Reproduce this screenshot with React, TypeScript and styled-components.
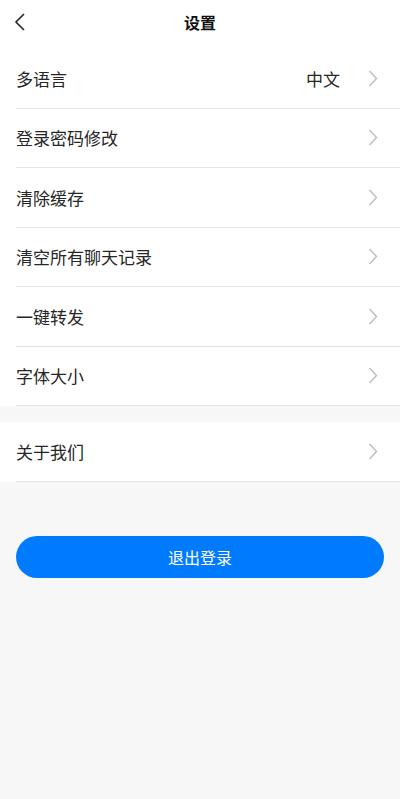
import styled, { createGlobalStyle } from "styled-components";

const GlobalStyle = createGlobalStyle`
  html, body {
    margin: 0;
    padding: 0;
    background: #f7f7f7;
  }
  body {
    font-family: "Noto Sans CJK SC", "Noto Sans", sans-serif;
  }
`;

const Page = styled.div`
  min-height: 799px;
  background: #f7f7f7;
  display: flex;
  flex-direction: column;
`;

const Header = styled.div`
  height: 49px;
  box-sizing: border-box;
  padding-top: 11px;
  background: #fff;
  display: flex;
  align-items: flex-start;
  justify-content: center;
  position: relative;
`;

const BackButton = styled.button`
  position: absolute;
  left: 10px;
  top: 12px;
  width: 20px;
  height: 20px;
  padding: 0;
  border: none;
  background: none;
  display: flex;
  align-items: center;
  justify-content: center;
`;

const Title = styled.h1`
  margin: 0;
  font-size: 16px;
  line-height: 22px;
  font-weight: 700;
  color: #111;
`;

const Section = styled.div<{ $gapTop?: boolean }>`
  background: #fff;
  margin-top: ${({ $gapTop }) => ($gapTop ? "16px" : "0")};
`;

const Row = styled.div`
  height: 58.5px;
  margin-left: 16px;
  padding-right: 22px;
  border-bottom: 1px solid #e3e3e3;
  display: flex;
  align-items: center;
  justify-content: space-between;
`;

const Label = styled.span`
  font-size: 17px;
  color: #262626;
`;

const Right = styled.div`
  display: flex;
  align-items: center;
  gap: 28px;
`;

const Value = styled.span`
  font-size: 17px;
  color: #262626;
`;

const Footer = styled.div`
  padding: 54px 16px 0;
`;

const LogoutButton = styled.button`
  width: 100%;
  height: 42px;
  border: none;
  border-radius: 21px;
  background: #007aff;
  color: #fff;
  font-family: inherit;
  font-size: 16px;
`;

const Chevron = () => (
  <svg width="10" height="17" viewBox="0 0 10 17">
    <path d="M1.5 1 L8.5 8.5 L1.5 16" fill="none" stroke="#bdbdbd" strokeWidth="1.4" />
  </svg>
);

const BackIcon = () => (
  <svg width="12" height="18" viewBox="0 0 12 18">
    <path d="M10 1 L2 9 L10 17" fill="none" stroke="#222" strokeWidth="1.6" />
  </svg>
);

type Item = { label: string; value?: string };

const mainItems: Item[] = [
  { label: "多语言", value: "中文" },
  { label: "登录密码修改" },
  { label: "清除缓存" },
  { label: "清空所有聊天记录" },
  { label: "一键转发" },
  { label: "字体大小" },
];

const SettingRow = ({ label, value }: Item) => (
  <Row>
    <Label>{label}</Label>
    <Right>
      {value && <Value>{value}</Value>}
      <Chevron />
    </Right>
  </Row>
);

const App = () => (
  <Page>
    <GlobalStyle />
    <Header>
      <BackButton aria-label="back">
        <BackIcon />
      </BackButton>
      <Title>设置</Title>
    </Header>
    <Section>
      {mainItems.map((item) => (
        <SettingRow key={item.label} {...item} />
      ))}
    </Section>
    <Section $gapTop>
      <SettingRow label="关于我们" />
    </Section>
    <Footer>
      <LogoutButton>退出登录</LogoutButton>
    </Footer>
  </Page>
);

export default App;
